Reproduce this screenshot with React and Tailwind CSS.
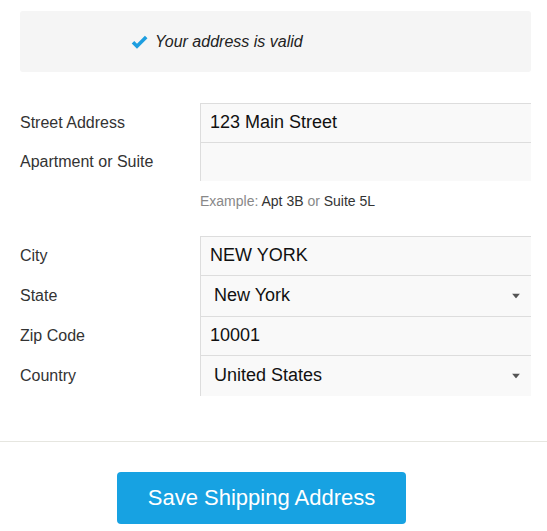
const font = "font-['Liberation_Sans',Arial,sans-serif]";

function Caret() {
  return (
    <svg
      className="pointer-events-none absolute right-[11px] top-1/2 -translate-y-1/2"
      width="8"
      height="5"
      viewBox="0 0 8 5"
    >
      <path d="M0 0h8L4 5z" fill="#555" />
    </svg>
  );
}

function Row({ label, value, select, tall }) {
  return (
    <div className="flex">
      <div
        className={`flex w-[180px] shrink-0 items-center text-[16px] text-[#333] ${
          tall ? "h-[41px]" : "h-[39px]"
        }`}
      >
        {label}
      </div>
      <div
        className={`relative flex flex-1 items-center border-t border-l border-[#ddd] bg-[#f9f9f9] pb-[1px] text-[18px] text-[#111] ${
          tall ? "h-[41px]" : "h-[39px]"
        } ${select ? "pl-[13px]" : "pl-[9px]"}`}
      >
        {value}
        {select ? <Caret /> : null}
      </div>
    </div>
  );
}

export default function App() {
  return (
    <div className={`min-h-dvh bg-white ${font}`}>
      <div className="pl-[20px] pr-[16px] pt-[11px]">
        <div className="flex h-[61px] items-center rounded-[3px] bg-[#f5f5f5] pl-[111px]">
          <svg width="17" height="14" viewBox="0 0 17 14" className="mr-[7px] mt-[1px]">
            <path
              d="M2 7.2 6 11.2 15.2 2"
              fill="none"
              stroke="#1d9ee0"
              strokeWidth="3.6"
            />
          </svg>
          <span className="text-[16px] italic text-[#222]">Your address is valid</span>
        </div>

        <div className="mt-[31px]">
          <Row label="Street Address" value="123 Main Street" />
          <Row label="Apartment or Suite" value="" />
        </div>
        <p className="mt-[10px] pl-[180px] text-[14px] leading-[20px] text-[#888]">
          Example: <span className="text-[#333]">Apt 3B</span> or{" "}
          <span className="text-[#333]">Suite 5L</span>
        </p>

        <div className="mt-[25px]">
          <Row label="City" value="NEW YORK" />
          <Row label="State" value="New York" select tall />
          <Row label="Zip Code" value="10001" />
          <Row label="Country" value="United States" select tall />
        </div>
      </div>

      <div className="mt-[45px] border-t border-[#e6e6e0]" />

      <div className="pl-[117px] pt-[30px]">
        <button
          type="button"
          className="h-[52px] w-[289px] rounded-[4px] bg-[#17a2e2] pb-[2px] text-[22px] text-white"
        >
          Save Shipping Address
        </button>
      </div>
    </div>
  );
}
